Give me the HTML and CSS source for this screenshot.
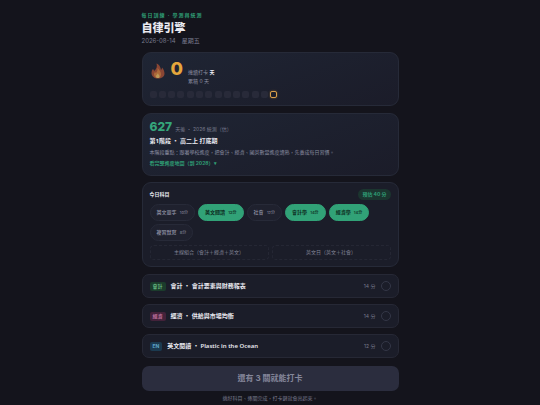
FILE: index.html
```html
<!DOCTYPE html>
<html lang="zh-Hant">
  <head>
    <meta charset="UTF-8" />
    <meta name="viewport" content="width=device-width, initial-scale=1.0" />
    <title>自律引擎</title>
    <link rel="stylesheet" href="styles.css">
  </head>
  <body>
    <main class="app">
      <header class="header">
        <div class="eyebrow">每日訓練 · 學測與統測</div>
        <h1>自律引擎</h1>
        <div class="date"><span>2026-08-14</span><span>星期五</span></div>
      </header>

      <section class="card streak">
        <div class="streak-top">
          <svg class="flame" viewBox="0 0 28 32" aria-hidden="true">
            <path fill="#8a4634" d="M11 1c7 3 8 8 9 13 1-1 2-3 2-5 3 3 5 8 5 12 0 7-6 10-13 10S1 27 1 20c0-3 1-6 3-8 1 1 2 2 2 4 5-4 7-9 5-15z" />
            <path fill="#ad6a3a" d="M13 9c3 5 7 7 7 14 0 4-3 7-6 7s-8-2-8-7c0-2 1-4 2-5 1 1 1 1 2 2 2-3 4-6 3-11z" />
            <path fill="#bd9a58" d="M14 20c0 3 3 4 3 7 0 2-1 3-3 3s-4-1-4-3c0-3 3-4 4-7z" />
          </svg>
          <div class="streak-num">0</div>
          <div class="streak-text">
            <div>連續打卡 <b>天</b></div>
            <div>累積 0 天</div>
          </div>
        </div>
        <div class="days">
          <i></i><i></i><i></i><i></i><i></i><i></i><i></i>
          <i></i><i></i><i></i><i></i><i></i><i></i><i class="today"></i>
        </div>
      </section>

      <section class="card phase">
        <div class="countdown"><strong>627</strong><span>天後 ・ 2026 統測（估）</span></div>
        <h2>第1階段 ・ 高二上 打底期</h2>
        <p>本階段重點：跟著學校進度，把會計、經濟、國英數當進度讀熟，先養成每日習慣。</p>
        <a href="#map">看完整進度地圖（到 2028）▾</a>
      </section>

      <section class="card subjects">
        <div class="subjects-head">
          <h3>今日科目</h3>
          <span class="estimate">預估 40 分</span>
        </div>
        <div class="chips">
          <button class="chip">英文單字 <small>10分</small></button>
          <button class="chip on">英文閱讀 <small>12分</small></button>
          <button class="chip">社會 <small>12分</small></button>
          <button class="chip on">會計學 <small>14分</small></button>
          <button class="chip on">經濟學 <small>14分</small></button>
          <button class="chip">複習默寫 <small>8分</small></button>
        </div>
        <div class="presets">
          <button>主線組合（會計＋經濟＋英文）</button>
          <button>英文日（英文＋社會）</button>
        </div>
      </section>

      <section class="tasks">
        <div class="task">
          <span class="tag acc">會計</span>
          <span class="task-name">會計 ・ 會計要素與財務報表</span>
          <span class="mins">14 分</span>
          <span class="check"></span>
        </div>
        <div class="task">
          <span class="tag eco">經濟</span>
          <span class="task-name">經濟 ・ 供給與市場均衡</span>
          <span class="mins">14 分</span>
          <span class="check"></span>
        </div>
        <div class="task">
          <span class="tag en">EN</span>
          <span class="task-name">英文閱讀 ・ Plastic in the Ocean</span>
          <span class="mins">12 分</span>
          <span class="check"></span>
        </div>
      </section>

      <button class="checkin">還有 3 關就能打卡</button>
      <p class="hint">挑好科目、逐關完成，打卡鍵就會亮起來。</p>
    </main>
  </body>
</html>
```

FILE: styles.css
```css
* {
  box-sizing: border-box;
}

body {
  margin: 0;
  background: #14141c;
  color: #e9e9f0;
  font-family: Inter, 'Noto Sans CJK TC', sans-serif;
  font-size: 5px;
  line-height: 9px;
}

h1,
h2,
h3,
p {
  margin: 0;
}

button {
  font-family: inherit;
  font-size: 5px;
  line-height: 9px;
  cursor: pointer;
}

.app {
  max-width: 257px;
  margin: 0 auto;
  padding-top: 11px;
}

.header {
  margin-bottom: 7px;
}

.eyebrow {
  color: #2f9d74;
  font-weight: 700;
  letter-spacing: 1px;
}

h1 {
  font-size: 11px;
  line-height: 16px;
  font-weight: 900;
}

.date {
  display: flex;
  gap: 6px;
  color: #77798c;
  font-size: 6px;
}

.card {
  padding: 7px;
  border: 1px solid #262a38;
  border-radius: 9px;
  background: #1b1d29;
}

.streak,
.phase {
  background: linear-gradient(160deg, #1f2534, #1b1c29);
}

.streak {
  margin-bottom: 7px;
}

.streak-top {
  display: flex;
  align-items: flex-start;
  margin-bottom: 5px;
}

.flame {
  width: 14px;
  height: 16px;
  margin: 3px 6px 0 1px;
}

.streak-num {
  margin-right: 5px;
  color: #e5a63c;
  font-size: 18px;
  font-weight: 800;
  line-height: 18px;
}

.streak-text {
  padding-top: 8px;
  color: #8b8da0;
}

.streak-text b {
  color: #f0f0f5;
}

.days {
  display: flex;
  justify-content: space-between;
  width: 128px;
}

.days i {
  width: 7px;
  height: 7px;
  border-radius: 2px;
  background: #282a39;
}

.days .today {
  border: 1px solid #d99f4a;
  background: #1d1f2b;
  box-shadow: 0 0 2px #8a6430;
}

.phase {
  margin-bottom: 6px;
}

.countdown {
  display: flex;
  align-items: baseline;
  gap: 3px;
  height: 12px;
  margin-bottom: 4px;
  color: #77798c;
}

.countdown strong {
  color: #35a67b;
  font-size: 12px;
  font-weight: 800;
  line-height: 12px;
}

.phase h2 {
  font-family: 'Noto Sans', 'Noto Sans CJK TC', sans-serif;
  font-size: 6px;
  line-height: 9px;
}

.phase p {
  margin: 2px 0;
  color: #8b8da0;
}

.phase a {
  display: block;
  color: #2f9d74;
  font-weight: 700;
  text-decoration: none;
}

.subjects {
  padding: 6px 7px;
  margin-bottom: 7px;
}

.subjects-head {
  display: flex;
  justify-content: space-between;
  align-items: center;
  margin-bottom: 4px;
}

.subjects h3 {
  font-size: 5px;
}

.estimate {
  padding: 1px 4px;
  border-radius: 6px;
  background: #1b352f;
  color: #2f9d74;
  font-weight: 700;
}

.chips {
  display: flex;
  flex-wrap: wrap;
  gap: 3px;
}

.chip {
  padding: 3px 6px;
  border: 1px solid #272a38;
  border-radius: 9px;
  background: #1f212e;
  color: #9496a8;
  font-weight: 500;
}

.chip small {
  margin-left: 2px;
  font-size: 4px;
  opacity: 0.8;
}

.chip.on {
  border-color: #31a277;
  background: #31a277;
  color: #0c2a20;
  font-weight: 700;
}

.presets {
  display: grid;
  grid-template-columns: 1fr 1fr;
  gap: 3px;
  margin-top: 4px;
}

.presets button {
  padding: 2px;
  border: 1px dashed #252734;
  border-radius: 4px;
  background: none;
  color: #85879a;
}

.tasks {
  display: grid;
  gap: 6px;
  margin-bottom: 8px;
}

.task {
  display: flex;
  align-items: center;
  gap: 5px;
  height: 24px;
  padding: 0 7px;
  border: 1px solid #262835;
  border-radius: 7px;
  background: #1b1d29;
}

.tag {
  padding: 0 3px;
  border-radius: 2px;
  font-weight: 700;
}

.acc {
  background: #1b3c2c;
  color: #68bd84;
}

.eco {
  background: #43223a;
  color: #c274a0;
}

.en {
  background: #1b3a50;
  color: #5ea5c8;
}

.task-name {
  flex: 1;
  font-family: 'Noto Sans', 'Noto Sans CJK TC', sans-serif;
  font-size: 6px;
  font-weight: 600;
}

.mins {
  color: #77798c;
}

.check {
  width: 10px;
  height: 10px;
  border: 1px solid #343747;
  border-radius: 50%;
}

.checkin {
  width: 100%;
  padding: 8px;
  border: 0;
  border-radius: 7px;
  background: #2b2d3e;
  color: #85879b;
  font-size: 8px;
  font-weight: 700;
}

.hint {
  margin-top: 3px;
  color: #77798c;
  text-align: center;
}
```
